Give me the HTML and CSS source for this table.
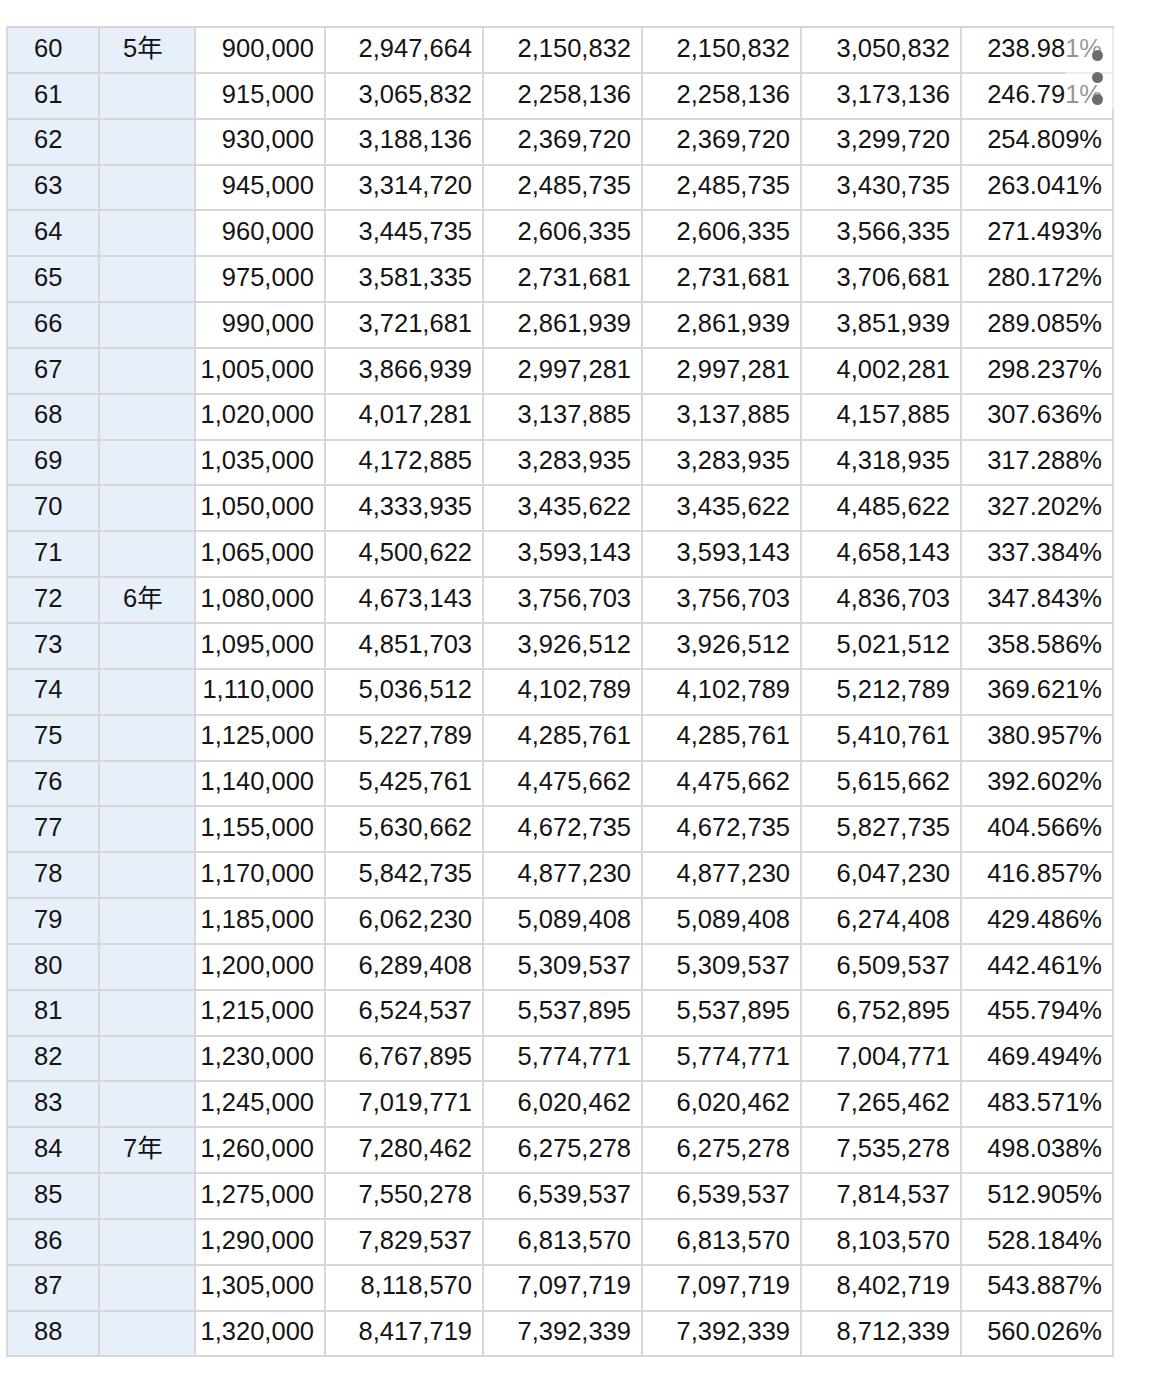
FILE: index.html
```html
<!DOCTYPE html>
<html lang="zh">
<head>
<meta charset="utf-8">
<title>表</title>
<link rel="stylesheet" href="styles.css">
</head>
<body>
<div class="wrap">
<table class="grid">
<colgroup>
<col class="c1"><col class="c2"><col class="c3"><col class="c4"><col class="c5"><col class="c6"><col class="c7"><col class="c8">
</colgroup>
<tbody>
<tr><td class="n">60</td><td class="y">5年</td><td>900,000</td><td>2,947,664</td><td>2,150,832</td><td>2,150,832</td><td>3,050,832</td><td>238.981%</td></tr>
<tr><td class="n">61</td><td class="y"></td><td>915,000</td><td>3,065,832</td><td>2,258,136</td><td>2,258,136</td><td>3,173,136</td><td>246.791%</td></tr>
<tr><td class="n">62</td><td class="y"></td><td>930,000</td><td>3,188,136</td><td>2,369,720</td><td>2,369,720</td><td>3,299,720</td><td>254.809%</td></tr>
<tr><td class="n">63</td><td class="y"></td><td>945,000</td><td>3,314,720</td><td>2,485,735</td><td>2,485,735</td><td>3,430,735</td><td>263.041%</td></tr>
<tr><td class="n">64</td><td class="y"></td><td>960,000</td><td>3,445,735</td><td>2,606,335</td><td>2,606,335</td><td>3,566,335</td><td>271.493%</td></tr>
<tr><td class="n">65</td><td class="y"></td><td>975,000</td><td>3,581,335</td><td>2,731,681</td><td>2,731,681</td><td>3,706,681</td><td>280.172%</td></tr>
<tr><td class="n">66</td><td class="y"></td><td>990,000</td><td>3,721,681</td><td>2,861,939</td><td>2,861,939</td><td>3,851,939</td><td>289.085%</td></tr>
<tr><td class="n">67</td><td class="y"></td><td>1,005,000</td><td>3,866,939</td><td>2,997,281</td><td>2,997,281</td><td>4,002,281</td><td>298.237%</td></tr>
<tr><td class="n">68</td><td class="y"></td><td>1,020,000</td><td>4,017,281</td><td>3,137,885</td><td>3,137,885</td><td>4,157,885</td><td>307.636%</td></tr>
<tr><td class="n">69</td><td class="y"></td><td>1,035,000</td><td>4,172,885</td><td>3,283,935</td><td>3,283,935</td><td>4,318,935</td><td>317.288%</td></tr>
<tr><td class="n">70</td><td class="y"></td><td>1,050,000</td><td>4,333,935</td><td>3,435,622</td><td>3,435,622</td><td>4,485,622</td><td>327.202%</td></tr>
<tr><td class="n">71</td><td class="y"></td><td>1,065,000</td><td>4,500,622</td><td>3,593,143</td><td>3,593,143</td><td>4,658,143</td><td>337.384%</td></tr>
<tr><td class="n">72</td><td class="y">6年</td><td>1,080,000</td><td>4,673,143</td><td>3,756,703</td><td>3,756,703</td><td>4,836,703</td><td>347.843%</td></tr>
<tr><td class="n">73</td><td class="y"></td><td>1,095,000</td><td>4,851,703</td><td>3,926,512</td><td>3,926,512</td><td>5,021,512</td><td>358.586%</td></tr>
<tr><td class="n">74</td><td class="y"></td><td>1,110,000</td><td>5,036,512</td><td>4,102,789</td><td>4,102,789</td><td>5,212,789</td><td>369.621%</td></tr>
<tr><td class="n">75</td><td class="y"></td><td>1,125,000</td><td>5,227,789</td><td>4,285,761</td><td>4,285,761</td><td>5,410,761</td><td>380.957%</td></tr>
<tr><td class="n">76</td><td class="y"></td><td>1,140,000</td><td>5,425,761</td><td>4,475,662</td><td>4,475,662</td><td>5,615,662</td><td>392.602%</td></tr>
<tr><td class="n">77</td><td class="y"></td><td>1,155,000</td><td>5,630,662</td><td>4,672,735</td><td>4,672,735</td><td>5,827,735</td><td>404.566%</td></tr>
<tr><td class="n">78</td><td class="y"></td><td>1,170,000</td><td>5,842,735</td><td>4,877,230</td><td>4,877,230</td><td>6,047,230</td><td>416.857%</td></tr>
<tr><td class="n">79</td><td class="y"></td><td>1,185,000</td><td>6,062,230</td><td>5,089,408</td><td>5,089,408</td><td>6,274,408</td><td>429.486%</td></tr>
<tr><td class="n">80</td><td class="y"></td><td>1,200,000</td><td>6,289,408</td><td>5,309,537</td><td>5,309,537</td><td>6,509,537</td><td>442.461%</td></tr>
<tr><td class="n">81</td><td class="y"></td><td>1,215,000</td><td>6,524,537</td><td>5,537,895</td><td>5,537,895</td><td>6,752,895</td><td>455.794%</td></tr>
<tr><td class="n">82</td><td class="y"></td><td>1,230,000</td><td>6,767,895</td><td>5,774,771</td><td>5,774,771</td><td>7,004,771</td><td>469.494%</td></tr>
<tr><td class="n">83</td><td class="y"></td><td>1,245,000</td><td>7,019,771</td><td>6,020,462</td><td>6,020,462</td><td>7,265,462</td><td>483.571%</td></tr>
<tr><td class="n">84</td><td class="y">7年</td><td>1,260,000</td><td>7,280,462</td><td>6,275,278</td><td>6,275,278</td><td>7,535,278</td><td>498.038%</td></tr>
<tr><td class="n">85</td><td class="y"></td><td>1,275,000</td><td>7,550,278</td><td>6,539,537</td><td>6,539,537</td><td>7,814,537</td><td>512.905%</td></tr>
<tr><td class="n">86</td><td class="y"></td><td>1,290,000</td><td>7,829,537</td><td>6,813,570</td><td>6,813,570</td><td>8,103,570</td><td>528.184%</td></tr>
<tr><td class="n">87</td><td class="y"></td><td>1,305,000</td><td>8,118,570</td><td>7,097,719</td><td>7,097,719</td><td>8,402,719</td><td>543.887%</td></tr>
<tr><td class="n">88</td><td class="y"></td><td>1,320,000</td><td>8,417,719</td><td>7,392,339</td><td>7,392,339</td><td>8,712,339</td><td>560.026%</td></tr>
</tbody>
</table>
<div class="scrollfade"></div>
<div class="dots"><span></span><span></span><span></span></div>
</div>
</body>
</html>
```
FILE: styles.css
```css
html, body {
  margin: 0;
  padding: 0;
  background: #ffffff;
}
body {
  font-family: "Liberation Sans", Arial, "Noto Sans CJK SC", sans-serif;
  color: #141414;
}
.wrap {
  position: relative;
  padding: 26px 0 0 6px;
}
.grid {
  border-collapse: separate;
  border-spacing: 0;
  table-layout: fixed;
  width: 1108px;
  border-top: 2px solid #d7d7d7;
  border-left: 2px solid #d7d7d7;
  font-size: 25.5px;
}
.c1 { width: 92px; }
.c2 { width: 96px; }
.c3 { width: 130px; }
.c4 { width: 158px; }
.c5 { width: 159px; }
.c6 { width: 159px; }
.c7 { width: 160px; }
.c8 { width: 152px; }
.grid tr {
  height: 45.85px;
}
.grid td {
  border-right: 2px solid #d7d7d7;
  border-bottom: 2px solid #d7d7d7;
  padding: 0 10px 3px 0;
  text-align: right;
  white-space: nowrap;
  line-height: 1;
  vertical-align: middle;
}
.grid td.n {
  background: #e7effb;
  text-align: left;
  padding: 0 0 3px 26px;
}
.grid td.y {
  background: #e7effb;
  text-align: left;
  padding: 0 0 3px 23px;
}
.scrollfade {
  position: absolute;
  left: 1066px;
  top: 29px;
  width: 50px;
  height: 80px;
  background: rgba(255, 255, 255, 0.55);
}
.dots {
  position: absolute;
  left: 1092px;
  top: 50px;
  display: flex;
  flex-direction: column;
  gap: 11px;
}
.dots span {
  display: block;
  width: 11px;
  height: 11px;
  border-radius: 50%;
  background: #6c6c6c;
}
```
